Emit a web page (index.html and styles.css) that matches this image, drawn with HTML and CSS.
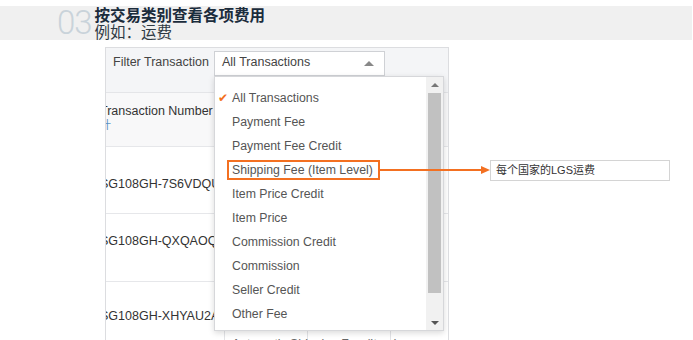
FILE: index.html
```html
<!DOCTYPE html>
<html lang="zh">
<head>
  <meta charset="UTF-8">
  <title>按交易类别查看各项费用</title>
  <link rel="stylesheet" href="styles.css">
</head>
<body>

  <div class="band">
    <div class="num">03</div>
    <div class="titles">
      <h1>按交易类别查看各项费用</h1>
      <p>例如：运费</p>
    </div>
  </div>

  <div class="shot">
    <div class="filter-bar">
      <span class="filter-label">Filter Transaction</span>
      <div class="select">
        <span>All Transactions</span>
        <span class="caret"></span>
      </div>
    </div>

    <div class="tabelle">
      <div class="zeile kopf">
        <div class="zelle nr">Transaction Number<br><span class="sort">计</span></div>
        <div class="zelle"></div>
        <div class="zelle"></div>
        <div class="zelle rest"></div>
      </div>
      <div class="zeile r1">
        <div class="zelle nr">SG108GH-7S6VDQU</div>
        <div class="zelle"></div>
        <div class="zelle"></div>
        <div class="zelle rest"></div>
      </div>
      <div class="zeile r2">
        <div class="zelle nr">SG108GH-QXQAOQT</div>
        <div class="zelle"></div>
        <div class="zelle"></div>
        <div class="zelle rest"></div>
      </div>
      <div class="zeile r3">
        <div class="zelle nr">SG108GH-XHYAU2A</div>
        <div class="zelle"></div>
        <div class="zelle"></div>
        <div class="zelle rest"></div>
      </div>
    </div>

    <!-- aufgeklapptes Dropdown -->
    <div class="dropdown">
      <ul class="optionen">
        <li class="gewaehlt"><span class="haken">✔</span>All Transactions</li>
        <li>Payment Fee</li>
        <li>Payment Fee Credit</li>
        <li>Shipping Fee (Item Level)</li>
        <li>Item Price Credit</li>
        <li>Item Price</li>
        <li>Commission Credit</li>
        <li>Commission</li>
        <li>Seller Credit</li>
        <li>Other Fee</li>
        <li class="halb">Automatic Shipping Fee (Item)</li>
      </ul>
      <div class="scrollbar">
        <span class="pfeil hoch"></span>
        <div class="daumen"></div>
        <span class="pfeil runter"></span>
      </div>
    </div>
  </div>

  <!-- Markierung + Hinweis -->
  <div class="markierung"></div>
  <svg class="pfeil-linie" width="112" height="10" viewBox="0 0 112 10">
    <line x1="0" y1="5" x2="104" y2="5" stroke="#f37021" stroke-width="2"/>
    <polygon points="102,1 111,5 102,9" fill="#f37021"/>
  </svg>
  <div class="hinweis">每个国家的LGS运费</div>

</body>
</html>
```

FILE: styles.css
```css
body {
  margin: 0;
  background: #fff;
  font-family: 'Liberation Sans', Arial, 'Noto Sans CJK SC', sans-serif;
  position: relative;
  width: 693px;
  height: 340px;
  overflow: hidden;
}

.band {
  margin-top: 6px;
  width: 692px;
  height: 34px;
  background: #f0f0f0;
  display: flex;
  box-sizing: border-box;
  padding-left: 57px;
}

.num {
  font-family: 'Roboto', sans-serif;
  font-weight: 300;
  font-size: 33px;
  line-height: 34px;
  color: #c9d3da;
  letter-spacing: -1px;
  margin-right: 3px;
}

.titles h1 {
  margin: 0;
  font-family: 'Noto Sans CJK SC', sans-serif;
  font-size: 15.5px;
  line-height: 17px;
  font-weight: bold;
  color: #1b2c3c;
}

.titles p {
  margin: 0;
  font-family: 'Noto Sans CJK SC', sans-serif;
  font-size: 15.5px;
  line-height: 17px;
  color: #2f3a44;
}

/* Screenshot-Ausschnitt */
.shot {
  position: relative;
  margin: 7px 0 0 105px;
  width: 344px;
  height: 300px;
  box-sizing: border-box;
  border: 1px solid #dcdde0;
  border-bottom: none;
  overflow: hidden;
  font-size: 12.5px;
  color: #333;
}

.filter-bar {
  height: 45px;
  background: #f4f5f7;
  border-bottom: 1px solid #e4e5e8;
  display: flex;
  align-items: flex-start;
  padding: 3px 0 0 7px;
  box-sizing: border-box;
}

.filter-label {
  margin-top: 4px;
  width: 101px;
  color: #444;
}

.select {
  width: 171px;
  height: 25px;
  box-sizing: border-box;
  border: 1px solid #cfd1d5;
  background: #fff;
  display: flex;
  align-items: center;
  justify-content: space-between;
  padding: 0 8px 3px 7px;
  color: #444;
}

.caret {
  width: 0;
  height: 0;
  border-left: 5px solid transparent;
  border-right: 5px solid transparent;
  border-bottom: 5px solid #888;
  margin: 3px 2px 0 0;
}

.tabelle {
  margin-left: -6px;
}

.zeile {
  display: flex;
  border-bottom: 1px solid #e6e7ea;
}

.kopf { height: 53px; background: #f8f8f9; }
.r1 { height: 66px; }
.r2 { height: 67px; }
.r3 { height: 80px; }

.zelle {
  flex-shrink: 0;
  border-right: 1px solid #e3e4e7;
  box-sizing: border-box;
  width: 83px;
}

.zelle.nr {
  width: 125px;
  padding: 11px 0 0 0;
  white-space: nowrap;
  overflow: hidden;
  line-height: 14px;
  color: #333;
}

.r1 .nr { padding-top: 30px; }
.r2 .nr { padding-top: 20px; }
.r3 .nr { padding-top: 27px; }

.zelle.rest { width: 138px; border-right: 1px solid #dcdde0; }

.sort {
  color: #5d93c4;
  font-size: 11px;
}

/* Dropdown */
.dropdown {
  position: absolute;
  left: 108px;
  top: 28px;
  width: 230px;
  height: 255px;
  background: #fff;
  border: 1px solid #d6d7da;
  box-shadow: 0 2px 6px rgba(0,0,0,0.15);
  box-sizing: border-box;
}

.optionen {
  list-style: none;
  margin: 0;
  padding: 9px 0 0 17px;
  color: #555;
  font-size: 12.3px;
}

.optionen li {
  height: 24px;
  line-height: 24px;
  white-space: nowrap;
  position: relative;
}

.optionen li.halb {
  margin-top: 6px;
  color: #666;
}

.haken {
  position: absolute;
  left: -14px;
  color: #f37021;
  font-size: 12px;
}

.scrollbar {
  position: absolute;
  top: 0;
  right: 0;
  width: 17px;
  height: 100%;
  background: #f1f1f1;
  display: flex;
  flex-direction: column;
  align-items: center;
}

.pfeil {
  width: 0;
  height: 0;
  border-left: 4px solid transparent;
  border-right: 4px solid transparent;
  margin: 6px 0;
}

.pfeil.hoch { border-bottom: 4px solid #777; }
.pfeil.runter { border-top: 4px solid #555; margin: 28px 0 5px; }

.daumen {
  width: 13px;
  height: 202px;
  background: #c1c1c1;
}

/* Markierung */
.markierung {
  position: absolute;
  left: 227px;
  top: 160px;
  width: 153px;
  height: 20px;
  box-sizing: border-box;
  border: 2px solid #f37021;
}

.pfeil-linie {
  position: absolute;
  left: 379px;
  top: 165px;
}

.hinweis {
  position: absolute;
  left: 490px;
  top: 160px;
  width: 180px;
  height: 21px;
  box-sizing: border-box;
  border: 1px solid #d4d4d4;
  background: #fff;
  font-family: 'Liberation Sans', 'Noto Sans CJK SC', sans-serif;
  font-size: 11px;
  line-height: 19px;
  padding-left: 5px;
  color: #333;
}
```
